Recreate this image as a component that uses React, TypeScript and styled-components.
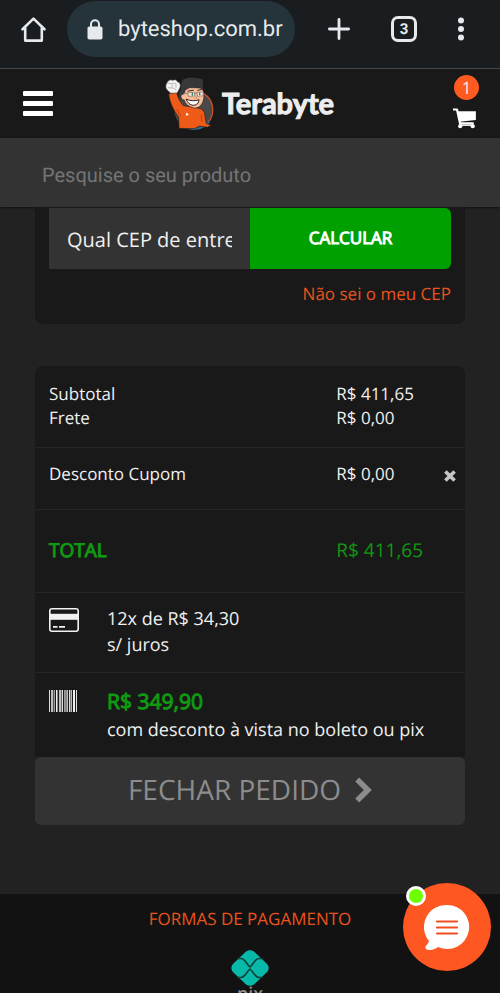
import React from "react";
import styled, { createGlobalStyle, css } from "styled-components";

const color = {
  page: "#222222",
  panel: "#191919",
  field: "#333333",
  green: "#00a000",
  greenText: "#0f9a12",
  orange: "#ff5a1f",
  text: "#f0f0f0",
};

const GlobalStyle = createGlobalStyle`
  *, *::before, *::after { box-sizing: border-box; }
  body {
    margin: 0;
    background: ${color.page};
    color: ${color.text};
    font-family: "Open Sans", "Noto Sans", sans-serif;
    font-size: 17px;
    text-rendering: geometricPrecision;
  }
  button, input { font: inherit; color: inherit; border: 0; margin: 0; text-rendering: inherit; }
  button { background: none; padding: 0; cursor: pointer; }
  svg { display: block; }
`;

const Screen = styled.div`
  display: flex;
  flex-direction: column;
  height: 100vh;
  overflow: hidden;
`;

const BrowserBar = styled.div`
  display: flex;
  align-items: center;
  flex: none;
  padding: 1px 36px 11px 20px;
  background: #191d20;
  border-bottom: 1px solid #44484a;
  color: #e6eaed;
  font-family: Roboto, sans-serif;
`;

const AddressPill = styled.button`
  display: flex;
  align-items: center;
  gap: 15px;
  flex: 1;
  height: 56px;
  margin: 0 33px 0 20px;
  padding-left: 20px;
  border-radius: 28px;
  background: #25333a;
  font-size: 22px;
`;

const BrowserActions = styled.div`
  display: flex;
  align-items: center;
  gap: 41px;
`;

const TabCount = styled.button`
  width: 26px;
  height: 26px;
  border: 3px solid #e6eaed;
  border-radius: 7px;
  font-size: 15px;
  font-weight: 700;
  line-height: 20px;
`;

const Header = styled.header`
  display: grid;
  grid-template-columns: 1fr auto 1fr;
  align-items: center;
  flex: none;
  height: 69px;
  padding: 0 21px 0 23px;
  background: ${color.panel};
`;

const MenuButton = styled.button`
  display: grid;
  gap: 5px;
  width: 30px;
`;

const MenuLine = styled.span`
  height: 5px;
  border-radius: 1px;
  background: #fff;
`;

const Brand = styled.a`
  display: flex;
  align-items: center;
  gap: 2px;
  padding-right: 8px;
  color: #ededed;
  text-decoration: none;
`;

const BrandName = styled.span`
  font-family: Lato, sans-serif;
  font-size: 29px;
  font-weight: 700;
  line-height: 32px;
  -webkit-text-stroke: 1px #ededed;
`;

const CartButton = styled.button`
  display: flex;
  flex-direction: column;
  align-items: flex-end;
  gap: 8px;
  padding-bottom: 4px;
`;

const CartBadge = styled.span`
  width: 25px;
  height: 25px;
  border-radius: 50%;
  background: ${color.orange};
  font-size: 17px;
  line-height: 25px;
  text-align: center;
`;

const SearchBar = styled.form`
  flex: none;
  background: ${color.field};
  box-shadow: 0 1px 2px #111;
`;

const SearchInput = styled.input`
  display: block;
  width: 100%;
  height: 69px;
  padding: 4px 42px 0;
  background: transparent;
  font-family: Roboto, sans-serif;
  font-size: 20px;
  outline: none;
  &::placeholder { color: #757575; opacity: 1; }
`;

const Content = styled.main`
  flex: none;
  padding: 0 35px 69px;
`;

const ShippingPanel = styled.section`
  padding: 1px 14px 17px;
  border-radius: 0 0 8px 8px;
  background: ${color.panel};
`;

const ZipForm = styled.form`
  display: grid;
  grid-template-columns: 1fr 1fr;
  height: 61px;
`;

const ZipInput = styled.input`
  min-width: 0;
  padding: 2px 18px 0;
  background: ${color.field};
  border-radius: 0;
  font-size: 20px;
  outline: none;
  &::placeholder { color: ${color.text}; opacity: 1; }
`;

const fauxBold = css`
  -webkit-text-stroke: 1px currentColor;
`;

const ZipButton = styled.button`
  padding-bottom: 2px;
  border-radius: 0 6px 6px 0;
  background: ${color.green};
  color: #fff;
  font-size: 17px;
  ${fauxBold}
`;

const ZipHelp = styled.a`
  display: block;
  width: fit-content;
  margin: 12px 0 0 auto;
  color: #e9541e;
  line-height: 26px;
  text-decoration: none;
`;

const Summary = styled.section`
  margin-top: 42px;
`;

const SummaryPanel = styled.div`
  border-radius: 8px 8px 0 0;
  background: ${color.panel};
`;

const SummaryRow = styled.div<{ $top: number; $bottom: number }>`
  display: grid;
  grid-template-columns: 12fr 5fr;
  padding: ${(p) => p.$top}px 9px ${(p) => p.$bottom}px 14px;
  border-bottom: 1px solid #262626;
  line-height: 24px;
`;

const ValueCell = styled.span`
  display: flex;
  align-items: center;
  justify-content: space-between;
`;

const RemoveButton = styled.button`
  padding-top: 3px;
`;

const TotalLabel = styled.span`
  color: ${color.greenText};
  font-size: 19px;
  ${fauxBold}
`;

const TotalValue = styled.span`
  color: ${color.greenText};
  font-size: 19px;
`;

const PaymentRow = styled.div<{ $last?: boolean }>`
  display: grid;
  grid-template-columns: 58px 1fr;
  padding: ${(p) => (p.$last ? "15px 14px 13px" : "13px 14px 14px")};
  border-bottom: ${(p) => (p.$last ? "0" : "1px solid #262626")};
  font-size: 18px;
  line-height: ${(p) => (p.$last ? 28 : 26)}px;
`;

const IconSlot = styled.span`
  padding-top: 2px;
`;

const PaymentText = styled.div`
  display: flex;
  flex-direction: column;
`;

const CashPrice = styled.span`
  color: ${color.greenText};
  font-size: 21px;
  ${fauxBold}
`;

const CheckoutButton = styled.button`
  display: flex;
  align-items: center;
  justify-content: center;
  gap: 14px;
  width: 100%;
  height: 68px;
  padding-bottom: 2px;
  border-radius: 6px;
  background: ${color.field};
  color: #8c8c8c;
  font-size: 28px;
`;

const Footer = styled.footer`
  display: flex;
  flex-direction: column;
  align-items: center;
  flex: 1 0 auto;
  padding-top: 12px;
  background: #121212;
`;

const FooterTitle = styled.h2`
  margin: 0 0 18px;
  color: #e9541e;
  font-size: 17px;
  font-weight: 400;
  line-height: 26px;
`;

const PixName = styled.span`
  color: #8e8e8e;
  font-size: 18px;
  font-weight: 600;
  line-height: 16px;
`;

const ChatButton = styled.button`
  position: fixed;
  right: 9px;
  bottom: 22px;
  display: grid;
  place-items: center;
  width: 88px;
  height: 88px;
  border-radius: 50%;
  background: #ff5722;
`;

const OnlineDot = styled.span`
  position: absolute;
  top: 3px;
  left: 3px;
  width: 20px;
  height: 20px;
  border: 3px solid #fff;
  border-radius: 50%;
  background: #6dff00;
`;

const HomeIcon = () => (
  <svg width="27" height="27" viewBox="0 0 27 27" fill="none" stroke="#e6eaed" strokeWidth="2.6" strokeLinejoin="round" strokeLinecap="round">
    <path d="M2.5 13.3 13.5 2.6 24.5 13.3M5.2 12v12.6h16.6V12" />
  </svg>
);

const LockIcon = () => (
  <svg width="16" height="21" viewBox="0 0 16 21">
    <path d="M4 9V5.2a4 4 0 0 1 8 0V9" fill="none" stroke="#e6eaed" strokeWidth="2" />
    <rect x="0.5" y="7.5" width="15" height="13" rx="1.8" fill="#e6eaed" />
  </svg>
);

const PlusIcon = () => (
  <svg width="22" height="22" viewBox="0 0 22 22" stroke="#e6eaed" strokeWidth="2.8" strokeLinecap="round">
    <path d="M11 1.4v19.2M1.4 11h19.2" />
  </svg>
);

const DotsIcon = () => (
  <svg width="6" height="24" viewBox="0 0 6 24" fill="#e6eaed">
    <circle cx="3" cy="3.5" r="3" />
    <circle cx="3" cy="12" r="3" />
    <circle cx="3" cy="20.5" r="3" />
  </svg>
);

const Mascot = () => (
  <svg width="60" height="60" viewBox="0 0 180 180" strokeLinejoin="round" strokeLinecap="round">
    <circle cx="101" cy="107" r="58" fill="#4b4848" />
    <path d="M130 58a58 58 0 0 1 12 90" fill="none" stroke="#c9512a" strokeWidth="4" />
    <path d="M68 157c22 12 56 13 78-12" fill="none" stroke="#28708f" strokeWidth="5" />
    <path d="M26 60 50 52c1 14 8 29 20 43l22 3 26 5c12 4 17 13 17 24l4 22 15 4-12 7-23-4-16 8-46-1-1-34C42 110 30 90 26 60Z" fill="#f05a19" stroke="#252020" strokeWidth="2" />
    <path d="M61 124c-4-6-8-11-10-17M124 122l2 20" fill="none" stroke="#b8430f" strokeWidth="3" />
    <path d="m78 116 9 5-8 5Z" fill="#fff" />
    <path d="M58 76c-4-14 0-26 5-31 0-14 1-26 9-30 15-6 39-5 55 1 4 5 1 18 2 29l-54 10-5 25Z" fill="#38383b" />
    <path d="M75 48c4 0 7-5 14-7 13 1 26-1 38 3 5 13 7 26 1 41-5 11-14 18-25 17-15-3-28-12-30-24-10 0-14-15-5-17 6-2 7-6 7-13Z" fill="#f8bd98" stroke="#302522" strokeWidth="2" />
    <path d="m84 51 16-2m13 0 13-3" stroke="#3a2a26" strokeWidth="3" />
    <path d="m84 55 20 1v10l-17 1Zm27 0 19-1-1 11-15 2Z" fill="#fbe6d6" stroke="#77706d" strokeWidth="2" />
    <path d="M104 58h7M84 58l-13 2" stroke="#77706d" strokeWidth="2" />
    <path d="M97 58v5M119 57v5" stroke="#247d66" strokeWidth="4" />
    <path d="m106 65 4 7-6 1" fill="none" stroke="#bd7654" strokeWidth="2" />
    <path d="M79 76c13 5 27 6 38 1-1 11-8 17-18 17-9-1-16-7-20-18Z" fill="#fff" stroke="#33211e" strokeWidth="3" />
    <path d="M22 24c5-7 11-8 16-5 7-4 12-1 15 5 9 1 10 13 5 21l-6 12-20 1-8-8c-9-6-8-18-2-26Z" fill="#f4f4f4" stroke="#38383b" strokeWidth="2" />
    <path d="m24 28 12 1v11M38 27l10 2v11M25 41l19 2 4 6" fill="none" stroke="#9a9c9f" strokeWidth="2" />
  </svg>
);

const CartIcon = () => (
  <svg width="27" height="21" viewBox="0 0 27 21">
    <path d="M1 1.5h4l3 13.8h13.7" fill="none" stroke="#fff" strokeWidth="2.2" strokeLinejoin="round" />
    <path d="M5.3 3.3h18.6v8.6L7.4 13.8Z" fill="#fff" />
    <circle cx="8.2" cy="18.2" r="2.1" fill="#fff" />
    <circle cx="20.7" cy="18.2" r="2.1" fill="#fff" />
    <path d="M8 17.2h13" stroke="#fff" strokeWidth="1.4" />
  </svg>
);

const RemoveIcon = () => (
  <svg width="12" height="12" viewBox="0 0 12 12" stroke="#c6c6c6" strokeWidth="3.6">
    <path d="m1.4 1.4 9.2 9.2M10.6 1.4l-9.2 9.2" />
  </svg>
);

const CardIcon = () => (
  <svg width="30" height="24" viewBox="0 0 30 24">
    <rect x="0.8" y="0.8" width="28.4" height="22.4" rx="2.2" fill="none" stroke="#f2f2f2" strokeWidth="1.6" />
    <path d="M1 5.8h28v6H1z" fill="#f2f2f2" />
    <path d="M4 18.8h4.5M10 18.8h6" stroke="#f2f2f2" strokeWidth="1.8" />
  </svg>
);

const bars: [number, number, string][] = [
  [0, 1, "#ddd"], [2, 2, "#bbb"], [4, 1, "#555"], [5, 1, "#999"], [7, 1, "#eee"], [8, 1, "#888"],
  [10, 2, "#bbb"], [12, 1, "#666"], [13, 1, "#ddd"], [15, 1, "#999"], [16, 2, "#888"], [18, 1, "#bbb"],
  [20, 1, "#ddd"], [21, 1, "#777"], [22, 1, "#bbb"], [24, 2, "#eee"], [27, 1, "#ddd"],
];

const BarcodeIcon = () => (
  <svg width="28" height="22" viewBox="0 0 28 22">
    {bars.map(([x, width, fill]) => (
      <rect key={x} x={x} width={width} height="22" fill={fill} />
    ))}
  </svg>
);

const ChevronIcon = () => (
  <svg width="17" height="26" viewBox="0 0 17 26" fill="none" stroke="#8c8c8c" strokeWidth="5.6">
    <path d="m2.2 2.6 10.6 10.4L2.2 23.4" />
  </svg>
);

const PixIcon = () => (
  <svg width="38" height="36" viewBox="0 0 38 36">
    <path d="M14.5 2c2.6-2.4 6.4-2.4 9 0l12.3 11.8c2.4 2.5 2.4 6 0 8.4L23.5 34c-2.6 2.4-6.4 2.4-9 0L2.2 22.2c-2.4-2.4-2.4-5.9 0-8.4Z" fill="#08b8a8" />
    <path d="M6 8.500h4c4 0 5 5 9 8.500 4-3.500 5-8.500 9-8.500h4M6 27.500h4c4 0 5-5 9-8.500 4 3.500 5 8.500 9 8.500h4" fill="none" stroke="#10403c" strokeWidth="1.600" />
  </svg>
);

const ChatIcon = () => (
  <svg width="46" height="46" viewBox="0 0 46 46">
    <path d="M23 1a22 22 0 1 1-9 42c-4 3-9 4-12 2-2-3 2-4 3-8A22 22 0 0 1 23 1Z" fill="#fff" />
    <path d="M13 17.500h20M13 23.500h20M13 29.500h20" stroke="#f04e20" strokeWidth="2.200" strokeLinecap="round" />
  </svg>
);

export default function App() {
  return (
    <Screen>
      <GlobalStyle />
      <BrowserBar>
        <button aria-label="Página inicial"><HomeIcon /></button>
        <AddressPill><LockIcon />byteshop.com.br</AddressPill>
        <BrowserActions>
          <button aria-label="Nova guia"><PlusIcon /></button>
          <TabCount>3</TabCount>
          <button aria-label="Mais opções"><DotsIcon /></button>
        </BrowserActions>
      </BrowserBar>

      <Header>
        <MenuButton aria-label="Menu"><MenuLine /><MenuLine /><MenuLine /></MenuButton>
        <Brand href="#"><Mascot /><BrandName>Terabyte</BrandName></Brand>
        <CartButton aria-label="Carrinho"><CartBadge>1</CartBadge><CartIcon /></CartButton>
      </Header>

      <SearchBar>
        <SearchInput aria-label="Pesquisa" placeholder="Pesquise o seu produto" />
      </SearchBar>

      <Content>
        <ShippingPanel>
          <ZipForm>
            <ZipInput aria-label="CEP" placeholder="Qual CEP de entrega?" />
            <ZipButton type="button">CALCULAR</ZipButton>
          </ZipForm>
          <ZipHelp href="#">Não sei o meu CEP</ZipHelp>
        </ShippingPanel>

        <Summary>
          <SummaryPanel>
            <SummaryRow $top={16} $bottom={17}>
              <span>Subtotal</span><ValueCell>R$ 411,65</ValueCell>
              <span>Frete</span><ValueCell>R$ 0,00</ValueCell>
            </SummaryRow>
            <SummaryRow $top={14} $bottom={23}>
              <span>Desconto Cupom</span>
              <ValueCell>R$ 0,00<RemoveButton aria-label="Remover cupom"><RemoveIcon /></RemoveButton></ValueCell>
            </SummaryRow>
            <SummaryRow $top={28} $bottom={30}>
              <TotalLabel>TOTAL</TotalLabel><TotalValue>R$ 411,65</TotalValue>
            </SummaryRow>
            <PaymentRow>
              <IconSlot><CardIcon /></IconSlot>
              <PaymentText><span>12x de R$ 34,30</span><span>s/ juros</span></PaymentText>
            </PaymentRow>
            <PaymentRow $last>
              <IconSlot><BarcodeIcon /></IconSlot>
              <PaymentText>
                <CashPrice>R$ 349,90</CashPrice>
                <span>com desconto à vista no boleto ou pix</span>
              </PaymentText>
            </PaymentRow>
          </SummaryPanel>
          <CheckoutButton>FECHAR PEDIDO<ChevronIcon /></CheckoutButton>
        </Summary>
      </Content>

      <Footer>
        <FooterTitle>FORMAS DE PAGAMENTO</FooterTitle>
        <PixIcon />
        <PixName>pix</PixName>
      </Footer>

      <ChatButton aria-label="Abrir chat"><ChatIcon /><OnlineDot /></ChatButton>
    </Screen>
  );
}
